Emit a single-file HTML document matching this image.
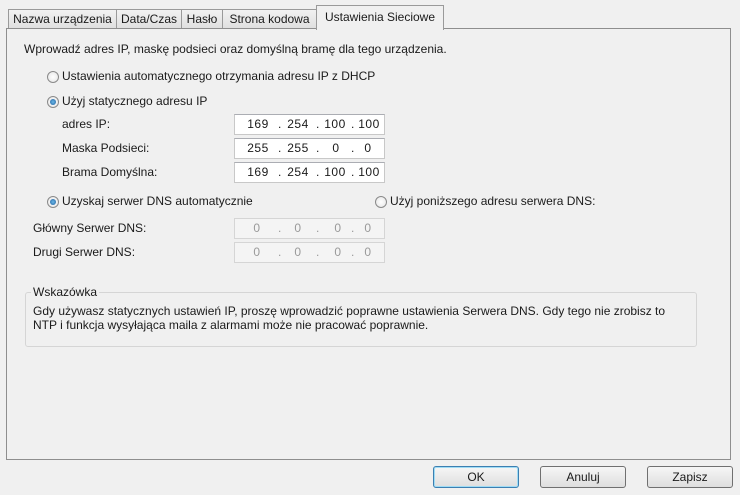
<!DOCTYPE html><html><head><style>
body{margin:0;width:740px;height:495px;background:#f0f0f0;font-family:"Liberation Sans",sans-serif;font-size:12px;color:#1a1a1a;position:relative;overflow:hidden}
.a{position:absolute;white-space:nowrap}
.tab{position:absolute;top:9px;height:18px;border:1px solid #9a9a9a;border-bottom:none;background:linear-gradient(#f2f2f2,#e0e0e0);text-align:center;line-height:18px}
.panel{position:absolute;left:6px;top:28px;width:723px;height:430px;border:1px solid #8e8e8e;background:#f0f0f0}
.r{position:absolute;width:10px;height:10px;border-radius:50%;border:1px solid #8a8a8a;background:radial-gradient(#fff,#e4e4e4)}
.r.on::after{content:"";position:absolute;left:2px;top:2px;width:6px;height:6px;border-radius:50%;background:radial-gradient(#6ab8e8,#1e5d9c)}
.in{position:absolute;left:234px;width:149px;height:19px;border:1px solid #c8c8c8;border-top-color:#abadb3;background:#fff;line-height:19px;letter-spacing:0.5px}
.in span{position:absolute;top:0;width:30px;margin-left:-15px;text-align:center}
.in i{position:absolute;top:0;font-style:normal;margin-left:-1px}
.dis{background:#f4f4f4;color:#9a9a9a;border-color:#d5d5d5}
.btn{position:absolute;top:466px;width:84px;height:20px;border:1px solid #707070;border-radius:3px;background:linear-gradient(#f6f6f6,#dedede);text-align:center;line-height:20px}
</style></head><body>
<div class="panel"></div>
<div class="tab" style="left:8px;width:107px">Nazwa urządzenia</div>
<div class="tab" style="left:116px;width:64px">Data/Czas</div>
<div class="tab" style="left:181px;width:40px">Hasło</div>
<div class="tab" style="left:222px;width:93px">Strona kodowa</div>
<div class="tab" style="left:316px;top:5px;width:126px;height:24px;background:#f0f0f0;line-height:22px">Ustawienia Sieciowe</div>
<div class="a" style="left:24px;top:42px">Wprowadź adres IP, maskę podsieci oraz domyślną bramę dla tego urządzenia.</div>
<div class="r" style="left:47px;top:71px"></div><div class="a" style="left:62px;top:69px">Ustawienia automatycznego otrzymania adresu IP z DHCP</div>
<div class="r on" style="left:47px;top:96px"></div><div class="a" style="left:62px;top:94px">Użyj statycznego adresu IP</div>
<div class="a" style="left:62px;top:117px">adres IP:</div>
<div class="a" style="left:62px;top:141px">Maska Podsieci:</div>
<div class="a" style="left:62px;top:165px">Brama Domyślna:</div>
<div class="in" style="top:114px"><span style="left:23px">169</span><i style="left:44px">.</i><span style="left:63px">254</span><i style="left:82px">.</i><span style="left:100px">100</span><i style="left:117px">.</i><span style="left:134px">100</span></div>
<div class="in" style="top:138px"><span style="left:23px">255</span><i style="left:44px">.</i><span style="left:63px">255</span><i style="left:82px">.</i><span style="left:101px">0</span><i style="left:117px">.</i><span style="left:133px">0</span></div>
<div class="in" style="top:162px"><span style="left:23px">169</span><i style="left:44px">.</i><span style="left:63px">254</span><i style="left:82px">.</i><span style="left:100px">100</span><i style="left:117px">.</i><span style="left:134px">100</span></div>
<div class="r on" style="left:47px;top:196px"></div><div class="a" style="left:62px;top:194px">Uzyskaj serwer DNS automatycznie</div>
<div class="r" style="left:375px;top:196px"></div><div class="a" style="left:390px;top:194px">Użyj poniższego adresu serwera DNS:</div>
<div class="a" style="left:33px;top:221px">Główny Serwer DNS:</div>
<div class="a" style="left:33px;top:245px">Drugi Serwer DNS:</div>
<div class="in dis" style="top:218px"><span style="left:22px">0</span><i style="left:44px">.</i><span style="left:63px">0</span><i style="left:82px">.</i><span style="left:103px">0</span><i style="left:117px">.</i><span style="left:133px">0</span></div>
<div class="in dis" style="top:242px"><span style="left:22px">0</span><i style="left:44px">.</i><span style="left:63px">0</span><i style="left:82px">.</i><span style="left:103px">0</span><i style="left:117px">.</i><span style="left:133px">0</span></div>
<div class="a" style="left:25px;top:292px;width:670px;height:53px;border:1px solid #d5d5d5;border-radius:3px"></div>
<div class="a" style="left:31px;top:285px;background:#f0f0f0;padding:0 2px">Wskazówka</div>
<div class="a" style="left:33px;top:304px">Gdy używasz statycznych ustawień IP, proszę wprowadzić poprawne ustawienia Serwera DNS. Gdy tego nie zrobisz to</div>
<div class="a" style="left:33px;top:318px">NTP i funkcja wysyłająca maila z alarmami może nie pracować poprawnie.</div>
<div class="btn" style="left:433px;border-color:#3c7fb1;box-shadow:inset 0 0 0 1px #9fdcf5">OK</div>
<div class="btn" style="left:540px">Anuluj</div>
<div class="btn" style="left:647px">Zapisz</div>
</body></html>
